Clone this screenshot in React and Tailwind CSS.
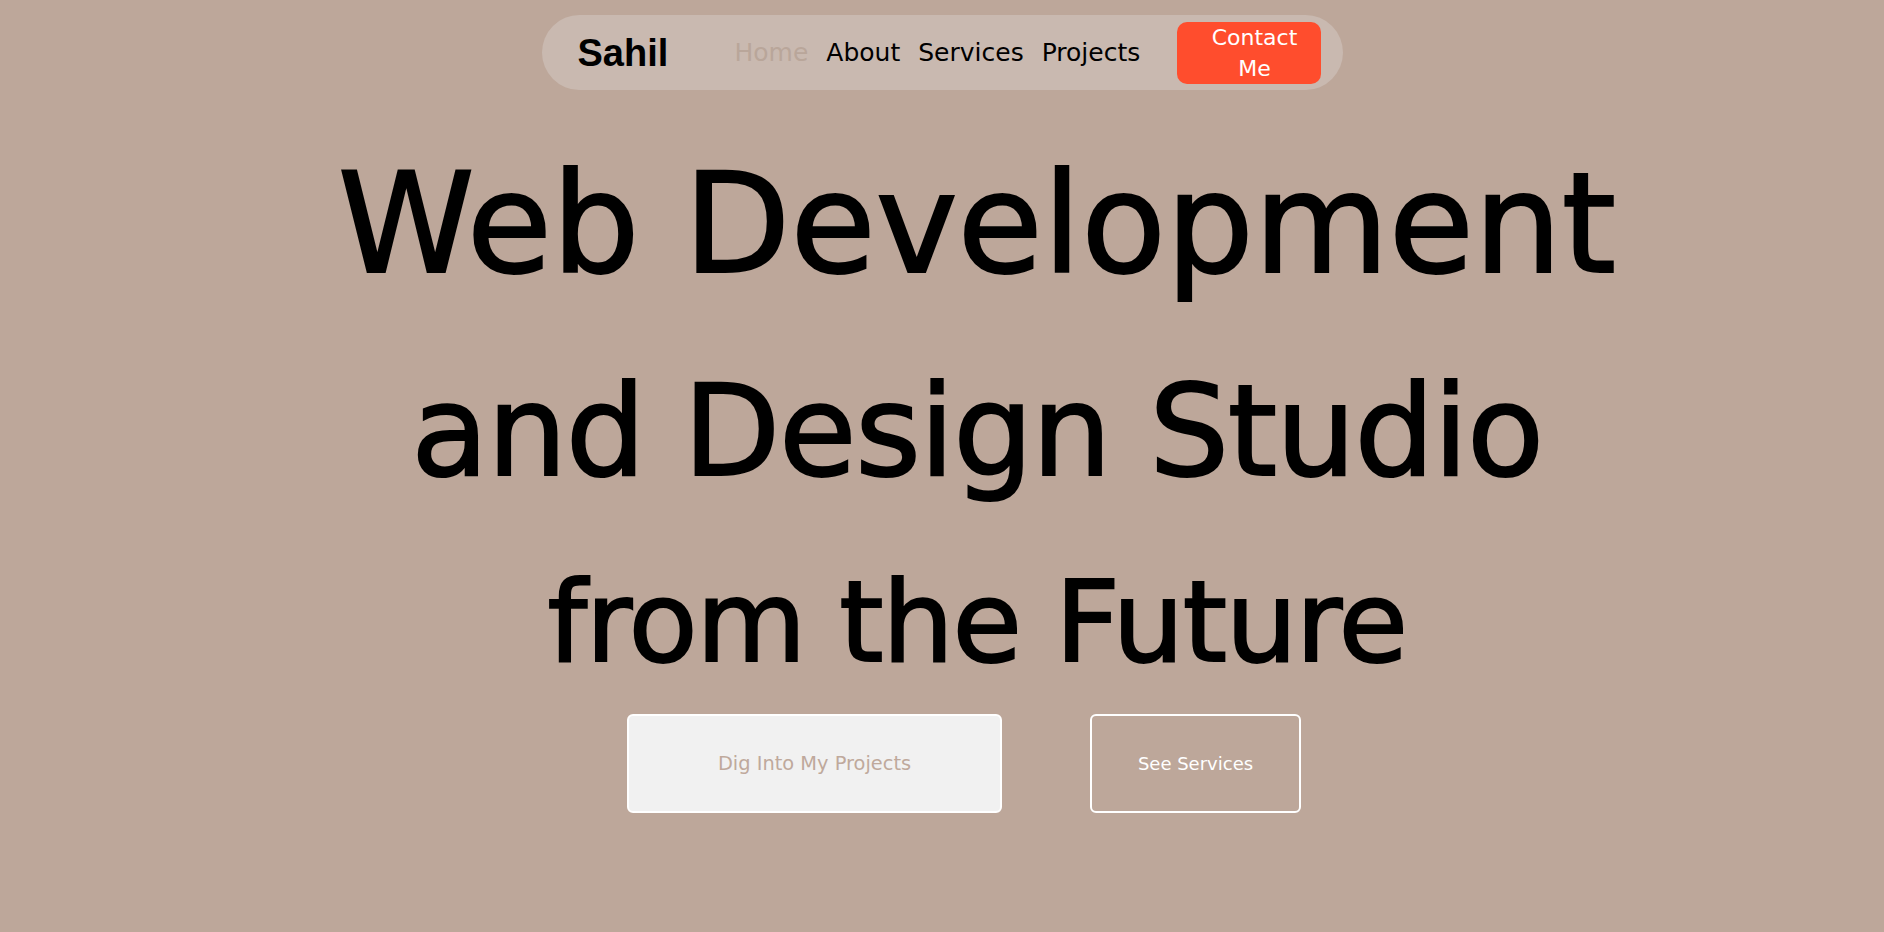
const links = ['Home', 'About', 'Services', 'Projects'];

const Navbar = () => (
    <div className="pt-[15px]">
        <nav className="mx-auto flex h-[75px] w-[801px] items-center rounded-full bg-[#c9b9b0] pl-[36px] pr-[22px]">
            <span className="inline-block w-[91px] font-['Liberation_Sans',sans-serif] text-[38px] font-bold leading-none text-black">
                Sahil
            </span>
            <ul className="ml-[66px] flex items-center gap-[18px] font-['DejaVu_Sans',sans-serif] text-[25px]">
                {links.map((link) => (
                    <li key={link} className={link === 'Home' ? 'text-[#b9a69a]' : 'text-black'}>
                        {link}
                    </li>
                ))}
            </ul>
            <button className="ml-auto h-[62px] w-[144px] rounded-[10px] bg-[#ff4d2d] pl-3 font-['DejaVu_Sans',sans-serif] text-[22px] leading-[31px] text-white">
                <span className="mx-auto block w-[92px]">Contact Me</span>
            </button>
        </nav>
    </div>
);

const App = () => {
    return (
        <div className="min-h-screen bg-[#bda79a] font-['DejaVu_Sans',sans-serif]">
            <Navbar />

            {/* Hero */}
            <h1 className="mt-[34px] pl-[70px] text-center font-normal text-black [-webkit-text-stroke:2px_black]">
                <span className="block text-[138.5px] leading-[200px]">Web Development</span>
                <span className="block text-[126px] leading-[215px] tracking-[-1.3px]">and Design Studio</span>
                <span className="block text-[113px] leading-[166px] tracking-[-1.4px]">from the Future</span>
            </h1>

            <div className="mt-[9px] flex justify-center gap-[88px] pl-[44px]">
                <button className="h-[99px] w-[375px] rounded-md border-2 border-white bg-[#f1f1f1] text-[19.4px] text-[#bfa99c]">
                    Dig Into My Projects
                </button>
                <button className="h-[99px] w-[211px] rounded-md border-2 border-white text-[18px] text-white">
                    See Services
                </button>
            </div>
        </div>
    );
};

export default App;
